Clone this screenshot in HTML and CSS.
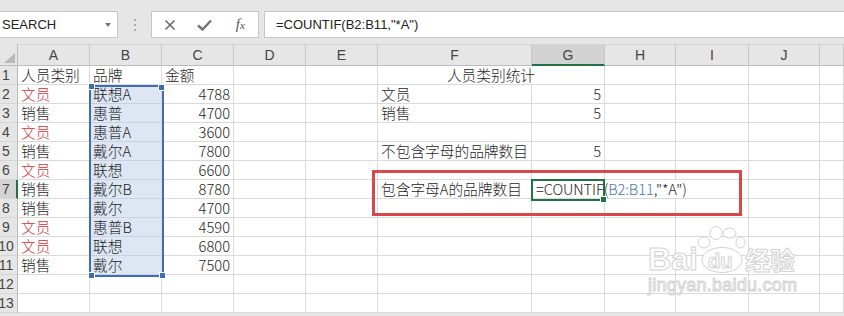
FILE: index.html
```html
<!doctype html>
<html>
<head>
    <meta charset="UTF-8">
    <link rel="stylesheet" href="styles.css">
</head>
<body>
<div class="toolbar">
    <div class="namebox">
        <span class="namebox-text">SEARCH</span>
        <span class="namebox-arrow"></span>
    </div>
    <div class="grip"><i></i><i></i><i></i></div>
    <div class="fxbox">
        <div class="fx-slot">
            <svg width="12" height="12" viewBox="0 0 12 12">
                <path d="M1.5 1.5 L10.5 10.5 M10.5 1.5 L1.5 10.5" stroke="#6a6a6a" stroke-width="1.6" fill="none"/>
            </svg>
        </div>
        <div class="fx-slot">
            <svg width="15" height="12" viewBox="0 0 15 12">
                <path d="M1 6.5 L5.5 10.5 L14 1.5" stroke="#727272" stroke-width="2.4" fill="none"/>
            </svg>
        </div>
        <div class="fx-slot"><span class="fx">f<span class="fx-x">x</span></span></div>
    </div>
    <div class="formula">=COUNTIF(B2:B11,"*A")</div>
</div>

<div class="sheet" id="sheet">
    <div class="sel">
        <i class="handle handle-tl"></i>
        <i class="handle handle-tr"></i>
        <i class="handle handle-bl"></i>
        <i class="handle handle-br"></i>
    </div>
    <div class="active-cell"><i class="handle handle-green"></i></div>
    <div class="red-box"></div>
    <svg class="watermark" width="170" height="90" viewBox="0 0 170 90">
        <g fill="#fff" stroke="#d2d2d2" stroke-width="1">
            <text x="8" y="55" class="wm-bai">Bai</text>
            <ellipse cx="76" cy="18" rx="6" ry="6.5"/>
            <ellipse cx="89.5" cy="18" rx="6.5" ry="5"/>
            <ellipse cx="100.5" cy="27.5" rx="4.5" ry="5.5"/>
            <ellipse cx="64" cy="27.5" rx="6" ry="5.5"/>
            <ellipse cx="82" cy="45" rx="20" ry="12.5"/>
            <text x="68" y="53" class="wm-du">du</text>
            <text x="105" y="55" class="wm-jy">经验</text>
            <text x="8" y="76" class="wm-url" textLength="149">jingyan.baidu.com</text>
        </g>
    </svg>
</div>

<script>
    let data = [
        ['人员类别', '品牌', '金额'],
        ['文员', '联想A', 4788],
        ['销售', '惠普', 4700],
        ['文员', '惠普A', 3600],
        ['销售', '戴尔A', 7800],
        ['文员', '联想', 6600],
        ['销售', '戴尔B', 8780],
        ['销售', '戴尔', 4700],
        ['文员', '惠普B', 4590],
        ['文员', '联想', 6800],
        ['销售', '戴尔', 7500]
    ];
    let stats = {
        2: ['文员', 5],
        3: ['销售', 5],
        5: ['不包含字母的品牌数目', 5],
        7: ['包含字母A的品牌数目', null]
    };
    let letters = ['A', 'B', 'C', 'D', 'E', 'F', 'G', 'H', 'I', 'J', ''];
    let formula = '=COUNTIF(<span class="ref">B2:B11</span>,"*A")';

    function cell(cls, text) {
        if (text === undefined || text === null) {
            text = '';
        }
        return '<div class="c ' + cls + '">' + text + '</div>';
    }

    let ht = '<div class="corner"></div>';
    for (let i = 0; i < letters.length; i++) {
        ht += '<div class="ch' + (letters[i] === 'G' ? ' is-active' : '') + '">' + letters[i] + '</div>';
    }
    for (let r = 1; r <= 13; r++) {
        ht += '<div class="rh' + (r === 7 ? ' is-active' : '') + '"><span>' + r + '</span></div>';
        let row = data[r - 1] || [];
        ht += cell(row[0] === '文员' ? 'is-red' : '', row[0]);
        ht += cell(r >= 2 && r <= 11 ? 'is-sel' : '', row[1]);
        ht += cell(typeof row[2] === 'number' ? 'is-num' : '', row[2]);
        ht += cell('', '') + cell('', '');
        let used = 5;
        if (r === 1) {
            ht += cell('is-center span-2', '人员类别统计');
            used += 2;
        } else if (stats[r]) {
            ht += cell('', stats[r][0]);
            if (r === 7) {
                ht += cell('is-formula span-3', formula);
                used += 4;
            } else {
                ht += cell('is-num', stats[r][1]);
                used += 2;
            }
        }
        for (let c = used; c < letters.length; c++) {
            ht += cell('', '');
        }
    }
    document.getElementById('sheet').insertAdjacentHTML('afterbegin', ht);
</script>
</body>
</html>
```

FILE: styles.css
```css
body {
    margin: 0;
    width: 844px;
    height: 316px;
    overflow: hidden;
    background-color: #e6e6e6;
    font-family: "Liberation Sans", "Noto Sans CJK SC", sans-serif;
}

.toolbar {
    display: flex;
    height: 44px;
    padding-top: 11px;
    box-sizing: border-box;
}

.namebox {
    display: flex;
    align-items: center;
    width: 118px;
    height: 27px;
    box-sizing: border-box;
    padding-left: 2px;
    background-color: #fff;
    border: 1px solid #c6c6c6;
    border-left: 0;
    font-size: 13px;
    color: #222;
}

.namebox-text {
    flex: 1;
}

.namebox-arrow {
    width: 0;
    height: 0;
    margin-right: 6px;
    border-left: 3px solid transparent;
    border-right: 3px solid transparent;
    border-top: 4px solid #777;
}

.grip {
    display: flex;
    flex-direction: column;
    align-items: center;
    justify-content: center;
    gap: 3px;
    width: 33px;
    height: 27px;
}

.grip i {
    width: 2px;
    height: 2px;
    background-color: #aaa;
}

.fxbox {
    display: flex;
    width: 108px;
    height: 27px;
    box-sizing: border-box;
    background-color: #fff;
    border: 1px solid #c6c6c6;
}

.fx-slot {
    display: flex;
    align-items: center;
    justify-content: center;
    width: 36px;
}

.fx {
    font-family: "Liberation Serif", serif;
    font-style: italic;
    font-size: 15px;
    color: #555;
}

.fx-x {
    font-size: 11px;
}

.formula {
    flex: 1;
    height: 27px;
    box-sizing: border-box;
    margin-left: 5px;
    padding-left: 11px;
    background-color: #fff;
    border: 1px solid #c6c6c6;
    border-right: 0;
    font-size: 13px;
    line-height: 25px;
    color: #222;
}

.sheet {
    position: relative;
    display: grid;
    grid-template-columns: 18px 72px 72px 72px 72px 72px 154px 73px 71px 73px 71px 1fr;
    grid-template-rows: 22px repeat(13, 19px);
    background-color: #fff;
}

.corner {
    display: flex;
    align-items: flex-end;
    justify-content: flex-end;
    padding: 0 2px 2px 0;
    background-color: #e6e6e6;
    border-right: 1px solid #bcbcbc;
    border-bottom: 1px solid #bcbcbc;
}

.corner::after {
    content: '';
    border-style: solid;
    border-width: 0 0 10px 11px;
    border-color: transparent transparent #b9b9b9 transparent;
}

.ch {
    background-color: #e6e6e6;
    border-right: 1px solid #c8c8c8;
    border-bottom: 1px solid #bcbcbc;
    box-shadow: inset 0 1px #d6d6d6;
    text-align: center;
    font-size: 14px;
    line-height: 22px;
    color: #444;
}

.ch.is-active {
    background-color: #d3d3d3;
    border-bottom: 2px solid #217346;
}

.rh {
    overflow: hidden;
    background-color: #e6e6e6;
    border-right: 1px solid #bcbcbc;
    border-bottom: 1px solid #d6d6d6;
    font-size: 14px;
    line-height: 18px;
    color: #444;
}

.rh span {
    display: block;
    width: 24px;
    margin-left: -6px;
    text-align: center;
}

.rh.is-active {
    background-color: #d3d3d3;
    border-right: 2px solid #217346;
}

.c {
    padding: 0 3px;
    border-right: 1px solid #dadada;
    border-bottom: 1px solid #dadada;
    white-space: nowrap;
    font-family: "Noto Sans CJK SC", "Noto Sans", sans-serif;
    font-weight: 300;
    font-size: 14.7px;
    line-height: 18px;
    color: #1e1e1e;
}

.is-red {
    color: #d3303a;
}

.is-sel {
    background-color: #dde6f2;
    border-bottom-color: #c9d3e0;
}

.is-num {
    text-align: right;
}

.is-center {
    text-align: center;
}

.span-2 {
    grid-column: span 2;
}

.span-3 {
    grid-column: span 3;
}

.is-formula {
    padding-left: 4px;
    letter-spacing: -0.1px;
}

.ref {
    color: #4a78b5;
}

.sel {
    position: absolute;
    left: 89px;
    top: 41px;
    width: 75px;
    height: 192px;
    box-sizing: border-box;
    border: 2px solid #3f6db3;
}

.handle {
    position: absolute;
    width: 5px;
    height: 5px;
    background-color: #3f6db3;
    border: 1px solid #fff;
}

.handle-tl {
    left: -3px;
    top: -4px;
}

.handle-tr {
    right: -3px;
    top: -3px;
}

.handle-bl {
    left: -3px;
    bottom: -4px;
}

.handle-br {
    right: -4px;
    bottom: -4px;
}

.active-cell {
    position: absolute;
    left: 531px;
    top: 135px;
    width: 74px;
    height: 22px;
    box-sizing: border-box;
    border: 2px solid #217346;
}

.handle-green {
    right: -4px;
    bottom: -4px;
    background-color: #217346;
}

.red-box {
    position: absolute;
    left: 372px;
    top: 126px;
    width: 370px;
    height: 46px;
    box-sizing: border-box;
    border: 3px solid #d9464c;
}

.watermark {
    position: absolute;
    left: 640px;
    top: 171px;
}

.wm-bai {
    font-family: "Liberation Sans", sans-serif;
    font-weight: bold;
    font-size: 32px;
}

.wm-du {
    font-family: "Liberation Sans", sans-serif;
    font-weight: bold;
    font-size: 20px;
}

.wm-jy {
    font-family: "Noto Sans CJK SC", sans-serif;
    font-weight: bold;
    font-size: 25px;
}

.wm-url {
    font-family: "Liberation Sans", sans-serif;
    font-size: 18px;
}
```
